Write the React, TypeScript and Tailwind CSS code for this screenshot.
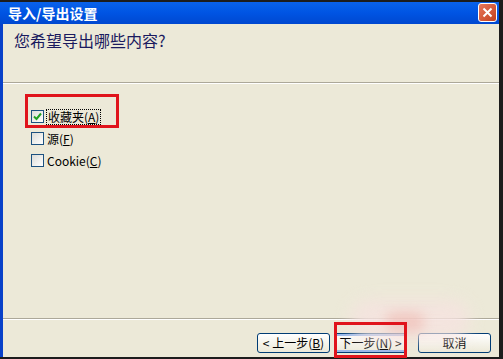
import React from "react";

const cjk = { fontFamily: '"Noto Sans CJK SC", "Liberation Sans", sans-serif' };

function Check({ checked }: { checked?: boolean }) {
  return (
    <div className="w-[13px] h-[13px] border border-[#1c5180] bg-gradient-to-br from-[#dcdcd7] to-white flex items-center justify-center shrink-0">
      {checked && (
        <svg width="9" height="9" viewBox="0 0 9 9">
          <path d="M1 4.5 L3.5 7 L8 1.5" stroke="#21a121" strokeWidth="2" fill="none" />
        </svg>
      )}
    </div>
  );
}

function Btn({ children, def }: { children: React.ReactNode; def?: boolean }) {
  return (
    <div
      className={
        "w-[73px] h-[20px] rounded-[3px] border border-[#003c74] bg-gradient-to-b from-white to-[#ece9d8] flex items-center justify-center text-[12px] text-black leading-none " +
        (def ? "shadow-[inset_0_0_0_2px_#98b8ea]" : "")
      }
      style={cjk}
    >
      {children}
    </div>
  );
}

export default function App() {
  return (
    <div className="relative w-[503px] h-[359px] bg-[#1c1c1c] overflow-hidden" style={cjk}>
      <div className="flex flex-col w-[499px] h-[357px] pt-[2px]">
        {/* title bar */}
        <div className="h-[22px] bg-gradient-to-b from-[#0a62ea] via-[#0054e3] to-[#0048d0] flex items-center pl-[8px] pr-[2px] justify-between">
          <span className="text-white font-bold text-[14px] leading-none">导入/导出设置</span>
          <div className="w-[19px] h-[19px] rounded-[3px] border border-white bg-gradient-to-br from-[#e8775a] to-[#c2401c] flex items-center justify-center mb-[2px]">
            <svg width="11" height="11" viewBox="0 0 11 11">
              <path d="M1.5 1.5 L9.5 9.5 M9.5 1.5 L1.5 9.5" stroke="white" strokeWidth="2" />
            </svg>
          </div>
        </div>
        {/* body */}
        <div className="flex-1 flex flex-col bg-[#ece9d8] border-l-[3px] border-[#0841c9]">
          <div className="h-[58px] pl-[11px] pt-[7px]">
            <div className="text-[16px] text-[#1a1a5e] leading-[18px]">您希望导出哪些内容?</div>
          </div>
          <div className="h-px bg-[#aca899]" />
          <div className="h-px bg-white" />
          <div className="flex-1 flex flex-col pl-[28px] pt-[26px] gap-[9px]">
            <div className="flex items-center gap-[2px] h-[13px]">
              <Check checked />
              <span className="text-[12px] leading-none border border-dotted border-black px-[1px] py-[1px]">
                收藏夹(<u>A</u>)
              </span>
            </div>
            <div className="flex items-center gap-[3px] h-[13px]">
              <Check />
              <span className="text-[12px] leading-none">
                源(<u>F</u>)
              </span>
            </div>
            <div className="flex items-center gap-[3px] h-[13px]">
              <Check />
              <span className="text-[12px] leading-none">
                Cookie(<u>C</u>)
              </span>
            </div>
          </div>
          <div className="h-px bg-[#aca899]" />
          <div className="h-px bg-white" />
          <div className="h-[37px] flex items-start pt-[13px] pl-[254px]">
            <Btn>&lt; 上一步(<u>B</u>)</Btn>
            <div className="w-[4px]" />
            <Btn def>下一步(<u>N</u>) &gt;</Btn>
            <div className="w-[11px]" />
            <Btn>取消</Btn>
          </div>
        </div>
      </div>
      {/* watermark smudge */}
      <div className="absolute left-[350px] top-[300px] w-[120px] h-[40px] rounded-full bg-[#f6e3e0] opacity-80 blur-[8px]" />
      <div className="absolute left-[385px] top-[312px] w-[40px] h-[20px] rounded-full bg-[#efb8b0] opacity-60 blur-[6px]" />
      {/* red highlight boxes */}
      <div className="absolute left-[25px] top-[94px] w-[94px] h-[34px] border-[3px] border-[#e0141c]" />
      <div className="absolute left-[334px] top-[322px] w-[73px] h-[36px] border-[3px] border-[#e0141c]" />
    </div>
  );
}
